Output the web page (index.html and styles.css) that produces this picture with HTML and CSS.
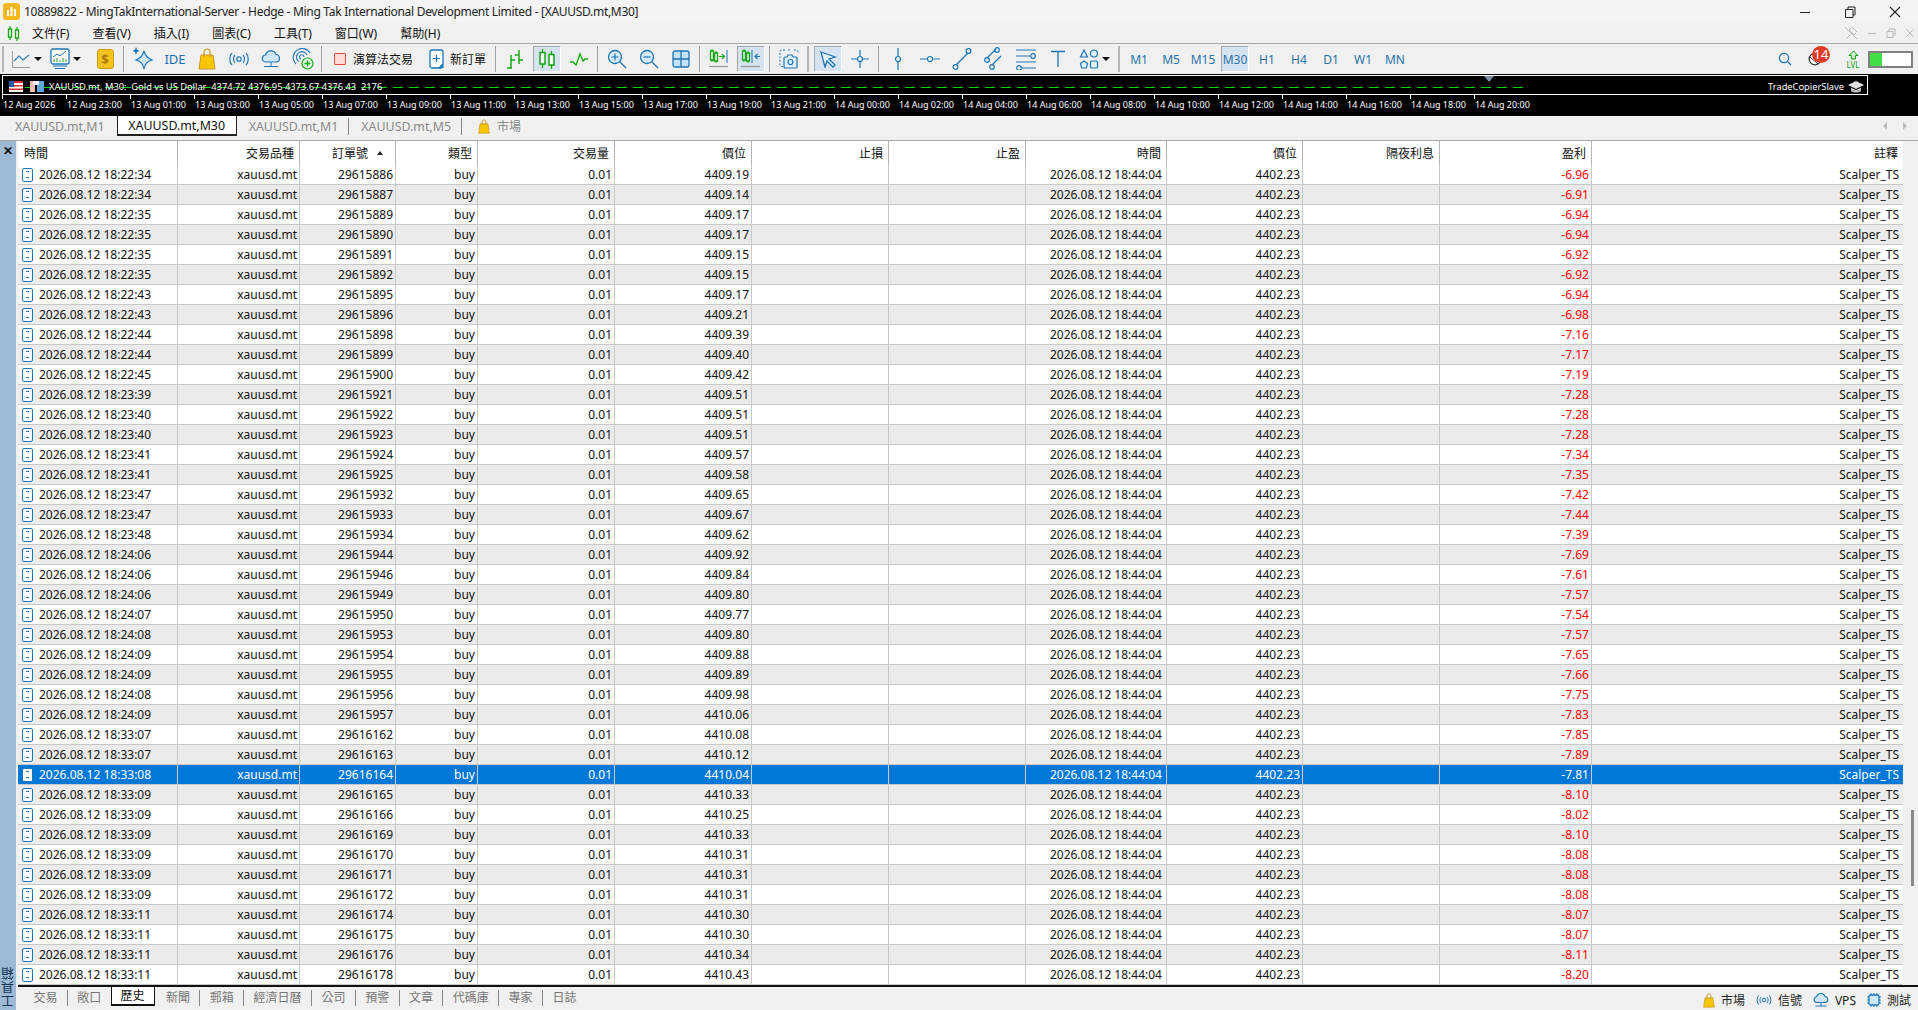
FILE: index.html
```html
<!DOCTYPE html>
<html lang="zh-Hant">
<head>
    <meta charset="UTF-8">
    <title>10889822 - MingTakInternational-Server - Hedge</title>
    <link rel="stylesheet" href="styles.css">
</head>
<body>
<div class="app">
    <div class="titlebar">
        <svg class="app-logo" width="17" height="17" viewBox="0 0 17 17"><rect width="17" height="17" rx="3" fill="#f5b81c"/><path d="M4 13V7h2v6zM7.5 13V4h2v9zM11 13V6h2v7z" fill="#fff"/></svg>
        <span class="title-text">10889822 - MingTakInternational-Server - Hedge - Ming Tak International Development Limited - [XAUUSD.mt,M30]</span>
        <div class="win-buttons">
            <svg width="14" height="14" viewBox="0 0 14 14"><path d="M2 7.5h10" stroke="#222"/></svg>
            <svg width="14" height="14" viewBox="0 0 14 14"><path d="M2.5 4.5h7.500v8h-7.500zM5 4.500V2h7v8h-2" fill="none" stroke="#222"/></svg>
            <svg width="14" height="14" viewBox="0 0 14 14"><path d="M2 2l10 10M12 2L2 12" stroke="#222" stroke-width="1.100"/></svg>
        </div>
    </div>

    <div class="menubar">
        <svg class="menu-logo" width="13" height="15" viewBox="0 0 13 15"><path d="M3 0v3M3 11v3M10 1v3M10 12v3" stroke="#16a916" stroke-width="1.200"/><path d="M1.500 3h3v8h-3zM8.500 4h3v8h-3z" fill="none" stroke="#16a916" stroke-width="1.300"/></svg>
        <span>文件(F)</span><span>查看(V)</span><span>插入(I)</span><span>圖表(C)</span><span>工具(T)</span><span>窗口(W)</span><span>幫助(H)</span>
        <div class="child-buttons">
            <svg width="14" height="14" viewBox="0 0 14 14"><path d="M2 13l4-4M5 4l5 5M8 1l5 5M7 2L4 5M12 7L9 10M1 1l12 12" stroke="#bbb" fill="none"/></svg>
            <svg width="10" height="14" viewBox="0 0 10 14"><path d="M1 7.500h8" stroke="#bbb"/></svg>
            <svg width="10" height="14" viewBox="0 0 10 14"><path d="M1 5.500h6v6H1zM3 5V3h6v6H7.500" fill="none" stroke="#bbb"/></svg>
            <svg width="10" height="14" viewBox="0 0 10 14"><path d="M1 3l8 8M9 3l-8 8" stroke="#bbb"/></svg>
        </div>
    </div>

    <div class="toolbar">
        <i class="grip"></i>
        <div class="tb tb-wide tb-first">
            <svg width="20" height="20" viewBox="0 0 20 20"><path d="M1.500 2v16.500H19" fill="none" stroke="#9a9a9a"/><path d="M3 12l5-5 4 4 6-5" fill="none" stroke="#2f7fb8" stroke-width="1.200"/></svg>
            <i class="caret"></i>
        </div>
        <div class="tb tb-wide">
            <svg width="20" height="22" viewBox="0 0 20 22"><rect x="1" y="1" width="18" height="15" rx="2" fill="#fff" stroke="#1c76b5" stroke-width="1.300"/><path d="M3 9l4-3 3 2 6-5" fill="none" stroke="#1c76b5"/><path d="M4 14v-3M7 14v-4M10 14v-2M13 14v-4M16 14v-3" stroke="#19a019"/><path d="M3 18h14M5 20.500h10" stroke="#1c76b5"/></svg>
            <i class="caret"></i>
        </div>
        <div class="tb tb-shift2">
            <span class="coin">$</span>
        </div>
        <i class="sep"></i>
        <div class="tb">
            <svg width="22" height="24" viewBox="0 0 22 24"><path d="M12 4c1 4 3 7 8 9-5 1-7 4-8 9-1-5-3-8-8-9 5-2 7-5 8-9z" fill="#cfe6f7" stroke="#1c76b5" stroke-width="1.200"/><path d="M4 0l1 2.500L7.500 4 5 5 4 8 3 5 .5 4 3 2.500z" fill="#1c76b5"/></svg>
        </div>
        <div class="tb tb-text">IDE</div>
        <div class="tb">
            <svg width="18" height="22" viewBox="0 0 18 22"><path d="M3 7h12l2 14H1z" fill="#f7c600" stroke="#c9962b"/><path d="M6 9V4a3 3 0 016 0v5" fill="none" stroke="#c9962b" stroke-width="1.200"/></svg>
        </div>
        <div class="tb">
            <svg width="20" height="16" viewBox="0 0 20 16"><circle cx="10" cy="8" r="2.200" fill="none" stroke="#2f7fb8" stroke-width="1.300"/><path d="M6 4c-2 2-2 6 0 8M14 4c2 2 2 6 0 8M3 2c-3 3-3 9 0 12M17 2c3 3 3 9 0 12" fill="none" stroke="#2f7fb8" stroke-width="1.300"/></svg>
        </div>
        <div class="tb">
            <svg width="20" height="20" viewBox="0 0 20 20"><path d="M5 13a3.500 3.500 0 01-.5-7A5.500 5.500 0 0115 5.500 3.800 3.800 0 0115.500 13z" fill="#cfe6f7" stroke="#1c76b5" stroke-width="1.200"/><path d="M10 13v4M3 17.500h14" stroke="#1c76b5"/></svg>
        </div>
        <div class="tb">
            <svg width="22" height="22" viewBox="0 0 22 22"><path d="M4 16A9 9 0 1118 5M6.500 13.500A5.500 5.500 0 1115 7M9 11a2.200 2.200 0 113 -2" fill="none" stroke="#2f7fb8" stroke-width="1.200"/><circle cx="15.500" cy="15.500" r="5.500" fill="#dff5df" stroke="#16a916" stroke-width="1.200"/><path d="M15.500 12.500v6M12.500 15.500h6" stroke="#16a916" stroke-width="1.300"/></svg>
        </div>
        <i class="sep"></i>
        <div class="tb-label tb-algo">
            <i class="algo-stop"></i><span>演算法交易</span>
        </div>
        <div class="tb-label tb-order">
            <svg width="15" height="20" viewBox="0 0 15 20"><path d="M3 1h9a2 2 0 012 2v15l-2 1H3a2 2 0 01-2-2V3a2 2 0 012-2z" fill="#fff" stroke="#1c76b5" stroke-width="1.300"/><path d="M7.500 6v7M4 9.500h7" stroke="#1c76b5" stroke-width="1.200"/><path d="M9 19l5-5v3l-2 2z" fill="#1c76b5"/></svg>
            <span>新訂單</span>
        </div>
        <i class="sep sep-shift"></i>
        <div class="tb">
            <svg width="18" height="20" viewBox="0 0 18 20"><path d="M5 6v14M1 19h4M5 11h4M13 1v14M9 6h4M13 11h4" stroke="#16a916" stroke-width="1.500" fill="none"/></svg>
        </div>
        <div class="tb tb-on">
            <svg width="18" height="20" viewBox="0 0 18 20"><path d="M4.500 0v3M4.500 15v4M13.500 2v3M13.500 16v4" stroke="#0fa50f" stroke-width="1.300"/><path d="M2 3.500h5v11.500H2zM11 5.500h5V16h-5z" fill="#fff" stroke="#0fa50f" stroke-width="1.500"/></svg>
        </div>
        <div class="tb">
            <svg width="20" height="14" viewBox="0 0 20 14"><path d="M1 10h3l3 3 4-11 3 7 2-2h3" fill="none" stroke="#16a916" stroke-width="1.400"/></svg>
        </div>
        <i class="sep"></i>
        <div class="tb">
            <svg width="20" height="20" viewBox="0 0 20 20"><circle cx="8" cy="8" r="6.500" fill="#d6ebf9" stroke="#1c76b5" stroke-width="1.300"/><path d="M8 4.500v7M4.500 8h7" stroke="#1c76b5" stroke-width="1.200"/><path d="M13 13l6 6" stroke="#1c76b5" stroke-width="1.300"/></svg>
        </div>
        <div class="tb">
            <svg width="20" height="20" viewBox="0 0 20 20"><circle cx="8" cy="8" r="6.500" fill="#d6ebf9" stroke="#1c76b5" stroke-width="1.300"/><path d="M4.500 8h7" stroke="#1c76b5" stroke-width="1.200"/><path d="M13 13l6 6" stroke="#1c76b5" stroke-width="1.300"/></svg>
        </div>
        <div class="tb">
            <svg width="18" height="18" viewBox="0 0 18 18"><rect x="1" y="1" width="16" height="16" rx="2" fill="#c4e3f8" stroke="#1c76b5" stroke-width="1.300"/><path d="M9 1v16M1 9h16" stroke="#1c76b5" stroke-width="1.300"/></svg>
        </div>
        <i class="sep"></i>
        <div class="tb">
            <svg width="20" height="20" viewBox="0 0 20 20"><path d="M3 0v2M3 11v2M7 2v2M7 12v2" stroke="#0fa50f"/><path d="M1.500 2h3v9h-3zM5.500 4h3v8h-3z" fill="none" stroke="#0fa50f" stroke-width="1.300"/><path d="M10 7.500h5M13 5l2.500 2.500L13 10" fill="none" stroke="#16a916" stroke-width="1.200"/><path d="M18 1v13" stroke="#1c76b5"/><path d="M0 17.500h19" stroke="#999" stroke-width="1.200"/></svg>
        </div>
        <div class="tb tb-on">
            <svg width="20" height="20" viewBox="0 0 20 20"><path d="M3 0v2M3 11v2M7 2v2M7 12v2" stroke="#0fa50f"/><path d="M1.500 2h3v9h-3zM5.500 4h3v8h-3z" fill="none" stroke="#0fa50f" stroke-width="1.300"/><path d="M11 1v13" stroke="#1c76b5"/><path d="M19 7.500h-5M16.500 5L14 7.500l2.500 2.500" fill="none" stroke="#1c76b5" stroke-width="1.200"/><path d="M0 17.500h19" stroke="#999" stroke-width="1.200"/></svg>
        </div>
        <i class="sep"></i>
        <div class="tb">
            <svg width="20" height="20" viewBox="0 0 20 20"><path d="M6 1H2.500A1.500 1.500 0 001 2.500V16a1.500 1.500 0 001.500 1.500H4M9 1h3M15 1h2.500A1.500 1.500 0 0119 2.500V4" fill="none" stroke="#1c76b5" stroke-dasharray="2 1.500"/><path d="M6 8h2l1-2h4l1 2h3a1 1 0 011 1v9a1 1 0 01-1 1H6a1 1 0 01-1-1V9a1 1 0 011-1z" fill="#e0f0fb" stroke="#1c76b5" stroke-width="1.200"/><circle cx="11.500" cy="13" r="2.500" fill="none" stroke="#1c76b5" stroke-width="1.200"/></svg>
        </div>
        <i class="grip grip-mid"></i>
        <div class="tb tb-on">
            <svg width="18" height="18" viewBox="0 0 18 18"><path d="M2 2l14 5-6 2 6 6-2 2-6-6-2 6z" fill="#e8f2fa" stroke="#1c76b5" stroke-width="1.300"/></svg>
        </div>
        <div class="tb">
            <svg width="18" height="18" viewBox="0 0 18 18"><path d="M9 0v6M9 12v6M0 9h6M12 9h6" stroke="#1c76b5" stroke-width="1.200"/><circle cx="9" cy="9" r="2.500" fill="none" stroke="#1c76b5" stroke-width="1.200"/></svg>
        </div>
        <i class="sep"></i>
        <div class="tb">
            <svg width="8" height="22" viewBox="0 0 8 22"><path d="M4 0v8M4 14v8" stroke="#1c76b5" stroke-width="1.200"/><circle cx="4" cy="11" r="2.500" fill="none" stroke="#1c76b5" stroke-width="1.200"/></svg>
        </div>
        <div class="tb">
            <svg width="20" height="8" viewBox="0 0 20 8"><path d="M0 4h7M13 4h7" stroke="#1c76b5" stroke-width="1.200"/><circle cx="10" cy="4" r="2.500" fill="none" stroke="#1c76b5" stroke-width="1.200"/></svg>
        </div>
        <div class="tb">
            <svg width="20" height="24" viewBox="0 0 20 24"><path d="M4 18L16 6" stroke="#1c76b5" stroke-width="1.200"/><circle cx="3.500" cy="20" r="2.400" fill="none" stroke="#1c76b5" stroke-width="1.200"/><circle cx="16.500" cy="4" r="2.400" fill="none" stroke="#1c76b5" stroke-width="1.200"/></svg>
        </div>
        <div class="tb">
            <svg width="20" height="24" viewBox="0 0 20 24"><path d="M3 11l9-9M8 18l9-9" stroke="#1c76b5" stroke-width="1.200"/><circle cx="3" cy="13" r="2.300" fill="none" stroke="#1c76b5" stroke-width="1.200"/><circle cx="13" cy="3" r="2.300" fill="none" stroke="#1c76b5" stroke-width="1.200"/><circle cx="8" cy="20" r="2.300" fill="none" stroke="#1c76b5" stroke-width="1.200"/></svg>
        </div>
        <div class="tb">
            <svg width="20" height="22" viewBox="0 0 20 22"><path d="M0 2h20M0 8h14M0 14h20M6 20h14" stroke="#1c76b5" stroke-width="1.200"/><circle cx="17" cy="8" r="2.300" fill="#f0f0f0" stroke="#1c76b5" stroke-width="1.200"/><circle cx="3" cy="20" r="2.300" fill="#f0f0f0" stroke="#1c76b5" stroke-width="1.200"/></svg>
        </div>
        <div class="tb">
            <svg width="16" height="18" viewBox="0 0 16 18"><path d="M1 1.500h14M8 1.500V17" stroke="#1c76b5" stroke-width="1.300"/></svg>
        </div>
        <div class="tb tb-wide tb-shapes">
            <svg width="20" height="22" viewBox="0 0 20 22"><path d="M5 2l3.500 7h-7z" fill="#e0f0fb" stroke="#1c76b5" stroke-width="1.200"/><circle cx="15" cy="5.500" r="3.500" fill="#e0f0fb" stroke="#1c76b5" stroke-width="1.200"/><path d="M5 13l3.500 2.500-1.200 4.500H2.700L1.500 15.500z" fill="#e0f0fb" stroke="#1c76b5" stroke-width="1.200"/><rect x="11.500" y="13" width="7" height="7" rx="1" fill="#e0f0fb" stroke="#1c76b5" stroke-width="1.200"/></svg>
            <i class="caret"></i>
        </div>
        <i class="grip grip-mid"></i>
        <div class="tb tb-period">M1</div>
        <div class="tb tb-period">M5</div>
        <div class="tb tb-period">M15</div>
        <div class="tb tb-period tb-on">M30</div>
        <div class="tb tb-period">H1</div>
        <div class="tb tb-period">H4</div>
        <div class="tb tb-period">D1</div>
        <div class="tb tb-period">W1</div>
        <div class="tb tb-period">MN</div>

        <div class="toolbar-right">
            <svg class="search" width="14" height="14" viewBox="0 0 14 14"><circle cx="6" cy="6" r="4.600" fill="none" stroke="#1c76b5" stroke-width="1.200"/><path d="M9.500 9.500L13 13" stroke="#1c76b5" stroke-width="1.300"/></svg>
            <div class="notify">
                <svg width="14" height="14" viewBox="0 0 14 14"><circle cx="7" cy="7" r="5.800" fill="#fff" stroke="#333" stroke-width="1.300"/><path d="M2 5l8 7" stroke="#333"/></svg>
                <span class="badge">14</span>
            </div>
            <div class="lvl">
                <svg width="11" height="10" viewBox="0 0 11 10"><path d="M5.500 1L10 5.500H7.500V9h-4V5.500H1z" fill="#cdeccd" stroke="#12a012"/></svg>
                <span>LVL</span>
            </div>
            <div class="battery"><i class="battery-fill"></i></div>
        </div>
    </div>

    <div class="chart">
        <div class="chart-box">
            <svg class="chart-dash" width="1865" height="18"><line x1="6" y1="11.500" x2="1526" y2="11.500" stroke="#0fd30f" stroke-width="1" stroke-dasharray="10 6"/></svg>
            <svg class="chart-flag" width="14" height="11" viewBox="0 0 14 11"><rect width="14" height="11" fill="#fff"/><rect width="14" height="2" fill="#d83030"/><rect y="4" width="14" height="1.500" fill="#d83030"/><rect y="7.500" width="14" height="1.500" fill="#d83030"/><rect width="5" height="6" fill="#2a5aa8"/></svg>
            <svg class="chart-type" width="14" height="11" viewBox="0 0 14 11"><path d="M0 0h5v11H0z" fill="#f3c0b8"/><path d="M7 0h7v11H7z" fill="#5ea8de"/><path d="M3 0h6v4H3z" fill="#eee"/></svg>
            <span class="chart-info">XAUUSD.mt, M30:&nbsp; Gold vs US Dollar&nbsp; 4374.72 4376.95 4373.67 4376.43&nbsp; 2176</span>
            <i class="chart-shift"></i>
            <span class="chart-ea">TradeCopierSlave</span>
            <svg class="chart-hat" width="16" height="14" viewBox="0 0 16 14"><path d="M0 5l8-4 8 4-8 4z" fill="#ddd"/><path d="M3 7.500V11c2 2 8 2 10 0V7.500L8 10z" fill="#bbb"/></svg>
        </div>
        <div class="chart-axis">
            <span>12 Aug 2026</span><span>12 Aug 23:00</span><span>13 Aug 01:00</span><span>13 Aug 03:00</span><span>13 Aug 05:00</span><span>13 Aug 07:00</span><span>13 Aug 09:00</span><span>13 Aug 11:00</span><span>13 Aug 13:00</span><span>13 Aug 15:00</span><span>13 Aug 17:00</span><span>13 Aug 19:00</span><span>13 Aug 21:00</span><span>14 Aug 00:00</span><span>14 Aug 02:00</span><span>14 Aug 04:00</span><span>14 Aug 06:00</span><span>14 Aug 08:00</span><span>14 Aug 10:00</span><span>14 Aug 12:00</span><span>14 Aug 14:00</span><span>14 Aug 16:00</span><span>14 Aug 18:00</span><span>14 Aug 20:00</span>
        </div>
    </div>

    <div class="chart-tabs">
        <span class="chart-tab">XAUUSD.mt,M1</span>
        <span class="chart-tab chart-tab-active">XAUUSD.mt,M30</span>
        <span class="chart-tab chart-tab-line">XAUUSD.mt,M1</span>
        <span class="chart-tab chart-tab-line">XAUUSD.mt,M5</span>
        <span class="chart-tab chart-tab-market">
            <svg width="12" height="15" viewBox="0 0 18 22"><path d="M3 7h12l2 14H1z" fill="#f7c600" stroke="#c9962b"/><path d="M6 9V4a3 3 0 016 0v5" fill="none" stroke="#c9962b" stroke-width="1.400"/></svg>
            市場
        </span>
        <div class="chart-tabs-nav"><i class="nav-left"></i><i class="nav-right"></i></div>
    </div>

    <div class="workspace">
        <div class="toolbox">
            <span class="toolbox-close">✕</span>
            <span class="toolbox-name">工具箱</span>
        </div>
        <div class="panel">
            <div class="panel-main">
                <table class="orders">
                    <colgroup>
                        <col class="w-time"><col class="w-symbol"><col class="w-ticket"><col class="w-type"><col class="w-vol"><col class="w-price"><col class="w-sl"><col class="w-tp"><col class="w-close"><col class="w-cprice"><col class="w-swap"><col class="w-profit"><col class="w-comment">
                    </colgroup>
                    <thead>
                        <tr><th class="first">時間</th><th>交易品種</th><th class="sorted">訂單號</th><th>類型</th><th>交易量</th><th>價位</th><th>止損</th><th>止盈</th><th>時間</th><th>價位</th><th>隔夜利息</th><th>盈利</th><th>註釋</th></tr>
                    </thead>
                    <tbody>
                        <tr><td class="first"><i class="doc"></i>2026.08.12 18:22:34</td><td>xauusd.mt</td><td>29615886</td><td>buy</td><td>0.01</td><td>4409.19</td><td></td><td></td><td class="closed">2026.08.12 18:44:04</td><td>4402.23</td><td></td><td class="loss">-6.96</td><td class="note">Scalper_TS</td></tr>
                        <tr><td class="first"><i class="doc"></i>2026.08.12 18:22:34</td><td>xauusd.mt</td><td>29615887</td><td>buy</td><td>0.01</td><td>4409.14</td><td></td><td></td><td class="closed">2026.08.12 18:44:04</td><td>4402.23</td><td></td><td class="loss">-6.91</td><td class="note">Scalper_TS</td></tr>
                        <tr><td class="first"><i class="doc"></i>2026.08.12 18:22:35</td><td>xauusd.mt</td><td>29615889</td><td>buy</td><td>0.01</td><td>4409.17</td><td></td><td></td><td class="closed">2026.08.12 18:44:04</td><td>4402.23</td><td></td><td class="loss">-6.94</td><td class="note">Scalper_TS</td></tr>
                        <tr><td class="first"><i class="doc"></i>2026.08.12 18:22:35</td><td>xauusd.mt</td><td>29615890</td><td>buy</td><td>0.01</td><td>4409.17</td><td></td><td></td><td class="closed">2026.08.12 18:44:04</td><td>4402.23</td><td></td><td class="loss">-6.94</td><td class="note">Scalper_TS</td></tr>
                        <tr><td class="first"><i class="doc"></i>2026.08.12 18:22:35</td><td>xauusd.mt</td><td>29615891</td><td>buy</td><td>0.01</td><td>4409.15</td><td></td><td></td><td class="closed">2026.08.12 18:44:04</td><td>4402.23</td><td></td><td class="loss">-6.92</td><td class="note">Scalper_TS</td></tr>
                        <tr><td class="first"><i class="doc"></i>2026.08.12 18:22:35</td><td>xauusd.mt</td><td>29615892</td><td>buy</td><td>0.01</td><td>4409.15</td><td></td><td></td><td class="closed">2026.08.12 18:44:04</td><td>4402.23</td><td></td><td class="loss">-6.92</td><td class="note">Scalper_TS</td></tr>
                        <tr><td class="first"><i class="doc"></i>2026.08.12 18:22:43</td><td>xauusd.mt</td><td>29615895</td><td>buy</td><td>0.01</td><td>4409.17</td><td></td><td></td><td class="closed">2026.08.12 18:44:04</td><td>4402.23</td><td></td><td class="loss">-6.94</td><td class="note">Scalper_TS</td></tr>
                        <tr><td class="first"><i class="doc"></i>2026.08.12 18:22:43</td><td>xauusd.mt</td><td>29615896</td><td>buy</td><td>0.01</td><td>4409.21</td><td></td><td></td><td class="closed">2026.08.12 18:44:04</td><td>4402.23</td><td></td><td class="loss">-6.98</td><td class="note">Scalper_TS</td></tr>
                        <tr><td class="first"><i class="doc"></i>2026.08.12 18:22:44</td><td>xauusd.mt</td><td>29615898</td><td>buy</td><td>0.01</td><td>4409.39</td><td></td><td></td><td class="closed">2026.08.12 18:44:04</td><td>4402.23</td><td></td><td class="loss">-7.16</td><td class="note">Scalper_TS</td></tr>
                        <tr><td class="first"><i class="doc"></i>2026.08.12 18:22:44</td><td>xauusd.mt</td><td>29615899</td><td>buy</td><td>0.01</td><td>4409.40</td><td></td><td></td><td class="closed">2026.08.12 18:44:04</td><td>4402.23</td><td></td><td class="loss">-7.17</td><td class="note">Scalper_TS</td></tr>
                        <tr><td class="first"><i class="doc"></i>2026.08.12 18:22:45</td><td>xauusd.mt</td><td>29615900</td><td>buy</td><td>0.01</td><td>4409.42</td><td></td><td></td><td class="closed">2026.08.12 18:44:04</td><td>4402.23</td><td></td><td class="loss">-7.19</td><td class="note">Scalper_TS</td></tr>
                        <tr><td class="first"><i class="doc"></i>2026.08.12 18:23:39</td><td>xauusd.mt</td><td>29615921</td><td>buy</td><td>0.01</td><td>4409.51</td><td></td><td></td><td class="closed">2026.08.12 18:44:04</td><td>4402.23</td><td></td><td class="loss">-7.28</td><td class="note">Scalper_TS</td></tr>
                        <tr><td class="first"><i class="doc"></i>2026.08.12 18:23:40</td><td>xauusd.mt</td><td>29615922</td><td>buy</td><td>0.01</td><td>4409.51</td><td></td><td></td><td class="closed">2026.08.12 18:44:04</td><td>4402.23</td><td></td><td class="loss">-7.28</td><td class="note">Scalper_TS</td></tr>
                        <tr><td class="first"><i class="doc"></i>2026.08.12 18:23:40</td><td>xauusd.mt</td><td>29615923</td><td>buy</td><td>0.01</td><td>4409.51</td><td></td><td></td><td class="closed">2026.08.12 18:44:04</td><td>4402.23</td><td></td><td class="loss">-7.28</td><td class="note">Scalper_TS</td></tr>
                        <tr><td class="first"><i class="doc"></i>2026.08.12 18:23:41</td><td>xauusd.mt</td><td>29615924</td><td>buy</td><td>0.01</td><td>4409.57</td><td></td><td></td><td class="closed">2026.08.12 18:44:04</td><td>4402.23</td><td></td><td class="loss">-7.34</td><td class="note">Scalper_TS</td></tr>
                        <tr><td class="first"><i class="doc"></i>2026.08.12 18:23:41</td><td>xauusd.mt</td><td>29615925</td><td>buy</td><td>0.01</td><td>4409.58</td><td></td><td></td><td class="closed">2026.08.12 18:44:04</td><td>4402.23</td><td></td><td class="loss">-7.35</td><td class="note">Scalper_TS</td></tr>
                        <tr><td class="first"><i class="doc"></i>2026.08.12 18:23:47</td><td>xauusd.mt</td><td>29615932</td><td>buy</td><td>0.01</td><td>4409.65</td><td></td><td></td><td class="closed">2026.08.12 18:44:04</td><td>4402.23</td><td></td><td class="loss">-7.42</td><td class="note">Scalper_TS</td></tr>
                        <tr><td class="first"><i class="doc"></i>2026.08.12 18:23:47</td><td>xauusd.mt</td><td>29615933</td><td>buy</td><td>0.01</td><td>4409.67</td><td></td><td></td><td class="closed">2026.08.12 18:44:04</td><td>4402.23</td><td></td><td class="loss">-7.44</td><td class="note">Scalper_TS</td></tr>
                        <tr><td class="first"><i class="doc"></i>2026.08.12 18:23:48</td><td>xauusd.mt</td><td>29615934</td><td>buy</td><td>0.01</td><td>4409.62</td><td></td><td></td><td class="closed">2026.08.12 18:44:04</td><td>4402.23</td><td></td><td class="loss">-7.39</td><td class="note">Scalper_TS</td></tr>
                        <tr><td class="first"><i class="doc"></i>2026.08.12 18:24:06</td><td>xauusd.mt</td><td>29615944</td><td>buy</td><td>0.01</td><td>4409.92</td><td></td><td></td><td class="closed">2026.08.12 18:44:04</td><td>4402.23</td><td></td><td class="loss">-7.69</td><td class="note">Scalper_TS</td></tr>
                        <tr><td class="first"><i class="doc"></i>2026.08.12 18:24:06</td><td>xauusd.mt</td><td>29615946</td><td>buy</td><td>0.01</td><td>4409.84</td><td></td><td></td><td class="closed">2026.08.12 18:44:04</td><td>4402.23</td><td></td><td class="loss">-7.61</td><td class="note">Scalper_TS</td></tr>
                        <tr><td class="first"><i class="doc"></i>2026.08.12 18:24:06</td><td>xauusd.mt</td><td>29615949</td><td>buy</td><td>0.01</td><td>4409.80</td><td></td><td></td><td class="closed">2026.08.12 18:44:04</td><td>4402.23</td><td></td><td class="loss">-7.57</td><td class="note">Scalper_TS</td></tr>
                        <tr><td class="first"><i class="doc"></i>2026.08.12 18:24:07</td><td>xauusd.mt</td><td>29615950</td><td>buy</td><td>0.01</td><td>4409.77</td><td></td><td></td><td class="closed">2026.08.12 18:44:04</td><td>4402.23</td><td></td><td class="loss">-7.54</td><td class="note">Scalper_TS</td></tr>
                        <tr><td class="first"><i class="doc"></i>2026.08.12 18:24:08</td><td>xauusd.mt</td><td>29615953</td><td>buy</td><td>0.01</td><td>4409.80</td><td></td><td></td><td class="closed">2026.08.12 18:44:04</td><td>4402.23</td><td></td><td class="loss">-7.57</td><td class="note">Scalper_TS</td></tr>
                        <tr><td class="first"><i class="doc"></i>2026.08.12 18:24:09</td><td>xauusd.mt</td><td>29615954</td><td>buy</td><td>0.01</td><td>4409.88</td><td></td><td></td><td class="closed">2026.08.12 18:44:04</td><td>4402.23</td><td></td><td class="loss">-7.65</td><td class="note">Scalper_TS</td></tr>
                        <tr><td class="first"><i class="doc"></i>2026.08.12 18:24:09</td><td>xauusd.mt</td><td>29615955</td><td>buy</td><td>0.01</td><td>4409.89</td><td></td><td></td><td class="closed">2026.08.12 18:44:04</td><td>4402.23</td><td></td><td class="loss">-7.66</td><td class="note">Scalper_TS</td></tr>
                        <tr><td class="first"><i class="doc"></i>2026.08.12 18:24:08</td><td>xauusd.mt</td><td>29615956</td><td>buy</td><td>0.01</td><td>4409.98</td><td></td><td></td><td class="closed">2026.08.12 18:44:04</td><td>4402.23</td><td></td><td class="loss">-7.75</td><td class="note">Scalper_TS</td></tr>
                        <tr><td class="first"><i class="doc"></i>2026.08.12 18:24:09</td><td>xauusd.mt</td><td>29615957</td><td>buy</td><td>0.01</td><td>4410.06</td><td></td><td></td><td class="closed">2026.08.12 18:44:04</td><td>4402.23</td><td></td><td class="loss">-7.83</td><td class="note">Scalper_TS</td></tr>
                        <tr><td class="first"><i class="doc"></i>2026.08.12 18:33:07</td><td>xauusd.mt</td><td>29616162</td><td>buy</td><td>0.01</td><td>4410.08</td><td></td><td></td><td class="closed">2026.08.12 18:44:04</td><td>4402.23</td><td></td><td class="loss">-7.85</td><td class="note">Scalper_TS</td></tr>
                        <tr><td class="first"><i class="doc"></i>2026.08.12 18:33:07</td><td>xauusd.mt</td><td>29616163</td><td>buy</td><td>0.01</td><td>4410.12</td><td></td><td></td><td class="closed">2026.08.12 18:44:04</td><td>4402.23</td><td></td><td class="loss">-7.89</td><td class="note">Scalper_TS</td></tr>
                        <tr class="selected"><td class="first"><i class="doc"></i>2026.08.12 18:33:08</td><td>xauusd.mt</td><td>29616164</td><td>buy</td><td>0.01</td><td>4410.04</td><td></td><td></td><td class="closed">2026.08.12 18:44:04</td><td>4402.23</td><td></td><td class="loss">-7.81</td><td class="note">Scalper_TS</td></tr>
                        <tr><td class="first"><i class="doc"></i>2026.08.12 18:33:09</td><td>xauusd.mt</td><td>29616165</td><td>buy</td><td>0.01</td><td>4410.33</td><td></td><td></td><td class="closed">2026.08.12 18:44:04</td><td>4402.23</td><td></td><td class="loss">-8.10</td><td class="note">Scalper_TS</td></tr>
                        <tr><td class="first"><i class="doc"></i>2026.08.12 18:33:09</td><td>xauusd.mt</td><td>29616166</td><td>buy</td><td>0.01</td><td>4410.25</td><td></td><td></td><td class="closed">2026.08.12 18:44:04</td><td>4402.23</td><td></td><td class="loss">-8.02</td><td class="note">Scalper_TS</td></tr>
                        <tr><td class="first"><i class="doc"></i>2026.08.12 18:33:09</td><td>xauusd.mt</td><td>29616169</td><td>buy</td><td>0.01</td><td>4410.33</td><td></td><td></td><td class="closed">2026.08.12 18:44:04</td><td>4402.23</td><td></td><td class="loss">-8.10</td><td class="note">Scalper_TS</td></tr>
                        <tr><td class="first"><i class="doc"></i>2026.08.12 18:33:09</td><td>xauusd.mt</td><td>29616170</td><td>buy</td><td>0.01</td><td>4410.31</td><td></td><td></td><td class="closed">2026.08.12 18:44:04</td><td>4402.23</td><td></td><td class="loss">-8.08</td><td class="note">Scalper_TS</td></tr>
                        <tr><td class="first"><i class="doc"></i>2026.08.12 18:33:09</td><td>xauusd.mt</td><td>29616171</td><td>buy</td><td>0.01</td><td>4410.31</td><td></td><td></td><td class="closed">2026.08.12 18:44:04</td><td>4402.23</td><td></td><td class="loss">-8.08</td><td class="note">Scalper_TS</td></tr>
                        <tr><td class="first"><i class="doc"></i>2026.08.12 18:33:09</td><td>xauusd.mt</td><td>29616172</td><td>buy</td><td>0.01</td><td>4410.31</td><td></td><td></td><td class="closed">2026.08.12 18:44:04</td><td>4402.23</td><td></td><td class="loss">-8.08</td><td class="note">Scalper_TS</td></tr>
                        <tr><td class="first"><i class="doc"></i>2026.08.12 18:33:11</td><td>xauusd.mt</td><td>29616174</td><td>buy</td><td>0.01</td><td>4410.30</td><td></td><td></td><td class="closed">2026.08.12 18:44:04</td><td>4402.23</td><td></td><td class="loss">-8.07</td><td class="note">Scalper_TS</td></tr>
                        <tr><td class="first"><i class="doc"></i>2026.08.12 18:33:11</td><td>xauusd.mt</td><td>29616175</td><td>buy</td><td>0.01</td><td>4410.30</td><td></td><td></td><td class="closed">2026.08.12 18:44:04</td><td>4402.23</td><td></td><td class="loss">-8.07</td><td class="note">Scalper_TS</td></tr>
                        <tr><td class="first"><i class="doc"></i>2026.08.12 18:33:11</td><td>xauusd.mt</td><td>29616176</td><td>buy</td><td>0.01</td><td>4410.34</td><td></td><td></td><td class="closed">2026.08.12 18:44:04</td><td>4402.23</td><td></td><td class="loss">-8.11</td><td class="note">Scalper_TS</td></tr>
                        <tr><td class="first"><i class="doc"></i>2026.08.12 18:33:11</td><td>xauusd.mt</td><td>29616178</td><td>buy</td><td>0.01</td><td>4410.43</td><td></td><td></td><td class="closed">2026.08.12 18:44:04</td><td>4402.23</td><td></td><td class="loss">-8.20</td><td class="note">Scalper_TS</td></tr>
                    </tbody>
                </table>
                <div class="scrollbar"><i class="scroll-thumb"></i></div>
            </div>
            <div class="bottom-bar">
                <span class="btab">交易</span><span class="btab btab-before-active">敞口</span><span class="btab btab-active">歷史</span><span class="btab">新聞</span><span class="btab">郵箱</span><span class="btab">經濟日曆</span><span class="btab">公司</span><span class="btab">預警</span><span class="btab">文章</span><span class="btab">代碼庫</span><span class="btab">專家</span><span class="btab btab-last">日誌</span>
                <div class="status">
                    <span class="status-item">
                        <svg width="12" height="15" viewBox="0 0 18 22"><path d="M3 7h12l2 14H1z" fill="#f7c600" stroke="#c9962b"/><path d="M6 9V4a3 3 0 016 0v5" fill="none" stroke="#c9962b" stroke-width="1.400"/></svg>
                        市場
                    </span>
                    <span class="status-item">
                        <svg width="16" height="12" viewBox="0 0 20 16"><circle cx="10" cy="8" r="2.200" fill="none" stroke="#2f7fb8" stroke-width="1.400"/><path d="M6 4c-2 2-2 6 0 8M14 4c2 2 2 6 0 8M3 2c-3 3-3 9 0 12M17 2c3 3 3 9 0 12" fill="none" stroke="#2f7fb8" stroke-width="1.400"/></svg>
                        信號
                    </span>
                    <span class="status-item">
                        <svg width="16" height="16" viewBox="0 0 20 20"><path d="M5 13a3.500 3.500 0 01-.5-7A5.500 5.500 0 0115 5.500 3.800 3.800 0 0115.500 13z" fill="#cfe6f7" stroke="#1c76b5" stroke-width="1.300"/><path d="M10 13v4M3 17.500h14" stroke="#1c76b5" stroke-width="1.300"/></svg>
                        VPS
                    </span>
                    <span class="status-item">
                        <svg width="14" height="14" viewBox="0 0 14 14"><rect x="2" y="2" width="10" height="10" rx="1.500" fill="#cfe6f7" stroke="#1c76b5" stroke-width="1.300"/><path d="M4 0v2M7 0v2M10 0v2M4 12v2M7 12v2M10 12v2M0 4h2M0 7h2M0 10h2M12 4h2M12 7h2M12 10h2" stroke="#1c76b5"/></svg>
                        測試
                    </span>
                </div>
            </div>
        </div>
    </div>
</div>
</body>
</html>
```

FILE: styles.css
```css
* {
    box-sizing: border-box;
}

html, body {
    margin: 0;
    padding: 0;
    overflow: hidden;
}

body {
    font-family: "Noto Sans", "Noto Sans CJK TC", sans-serif;
    font-size: 12px;
    color: #111;
    background-color: #f0f0f0;
}

i {
    display: block;
    font-style: normal;
}

.app {
    display: flex;
    flex-direction: column;
    width: 1918px;
    height: 1010px;
}

/* title bar */
.titlebar {
    display: flex;
    align-items: center;
    height: 23px;
    padding-left: 3px;
    background-color: #f3f3f3;
    flex: none;
}

.title-text {
    margin-left: 4px;
    color: #222;
    letter-spacing: -0.3px;
}

.win-buttons {
    display: flex;
    gap: 31px;
    margin-left: auto;
    margin-right: 16px;
}

/* menu */
.menubar {
    display: flex;
    align-items: center;
    gap: 23px;
    height: 21px;
    padding-left: 7px;
    border-bottom: 1px solid #a8a8a8;
    flex: none;
}

.menu-logo {
    margin-right: -11px;
}

.child-buttons {
    display: flex;
    align-items: center;
    gap: 9px;
    margin-left: auto;
    margin-right: 3px;
}

/* toolbar */
.toolbar {
    display: flex;
    align-items: center;
    gap: 4px;
    height: 30px;
    padding-left: 2px;
    flex: none;
}

.grip {
    width: 2px;
    height: 26px;
    background-image: radial-gradient(#b5b5b5 1px, transparent 1px);
    background-size: 2px 3px;
    flex: none;
}

.grip-mid {
    margin-right: 1px;
}

.sep {
    width: 1px;
    height: 26px;
    margin-right: 1px;
    background-color: #a0a0a0;
    flex: none;
}

.sep-shift {
    margin-left: 1px;
}

.tb {
    display: flex;
    align-items: center;
    justify-content: center;
    width: 28px;
    height: 26px;
    flex: none;
}

.tb-wide {
    width: 35px;
    gap: 3px;
    justify-content: flex-start;
}

.tb-first {
    margin-left: 3px;
}

.tb-shapes {
    width: 36px;
    margin-left: 1px;
    margin-right: 1px;
    padding-left: 2px;
}

.tb-shift2 {
    margin-left: 2px;
}

.tb-text {
    color: #1c6fae;
    font-size: 13px;
}

.tb-period {
    color: #2a72ab;
    font-size: 12px;
}

.tb-on {
    background-color: #d5e3f1;
    border-top: 1px solid #a6a6a6;
    border-left: 1px solid #a6a6a6;
    border-right: 1px solid #fff;
    border-bottom: 1px solid #fff;
}

.caret {
    width: 0;
    height: 0;
    border-left: 4px solid transparent;
    border-right: 4px solid transparent;
    border-top: 4px solid #111;
    flex: none;
}

.coin {
    display: flex;
    align-items: center;
    justify-content: center;
    width: 17px;
    height: 20px;
    border: 1px solid #c99d1e;
    border-radius: 3px;
    background-color: #f6c21c;
    color: #a9761a;
    font-size: 13px;
    font-weight: 700;
}

.tb-label {
    display: flex;
    align-items: center;
    height: 26px;
    flex: none;
}

.tb-algo {
    gap: 7px;
    width: 84px;
    margin-left: 5px;
    padding-left: 2px;
}

.tb-order {
    gap: 6px;
    width: 65px;
    margin-left: 5px;
    padding-left: 4px;
}

.algo-stop {
    width: 12px;
    height: 12px;
    border: 1px solid #e04a40;
    border-radius: 1px;
    background-color: #fcdcd6;
}

.toolbar-right {
    display: flex;
    align-items: center;
    margin-left: auto;
    padding-right: 5px;
}

.search {
    margin-right: 16px;
}

.notify {
    position: relative;
    width: 14px;
    height: 14px;
    margin-right: 24px;
}

.badge {
    position: absolute;
    left: 4px;
    top: -6px;
    width: 18px;
    height: 17px;
    border-radius: 50%;
    background-color: #e23b28;
    color: #fff;
    font-size: 13px;
    line-height: 17px;
    text-align: center;
}

.lvl {
    display: flex;
    flex-direction: column;
    align-items: center;
    width: 14px;
    margin-right: 8px;
    color: #12a012;
    font-size: 8px;
    line-height: 9px;
}

.battery {
    width: 45px;
    height: 17px;
    border: 2px solid #808080;
    background-color: #fff;
}

.battery-fill {
    width: 12px;
    height: 100%;
    background-color: #44dd44;
}

/* chart strip */
.chart {
    height: 42px;
    padding-top: 1px;
    background-color: #000;
    color: #fff;
    font-size: 9px;
    flex: none;
}

.chart-box {
    position: relative;
    display: flex;
    align-items: center;
    width: 1866px;
    height: 20px;
    margin-left: 2px;
    padding-top: 3px;
    border: 1px solid #fff;
    font-size: 9.3px;
}

.chart-dash {
    position: absolute;
    left: 0;
    top: 0;
}

.chart-flag {
    position: relative;
    margin-left: 6px;
}

.chart-type {
    position: relative;
    margin-left: 7px;
}

.chart-info {
    position: relative;
    margin-left: 5px;
    white-space: nowrap;
}

.chart-shift {
    position: absolute;
    left: 1481px;
    top: 0;
    width: 0;
    height: 0;
    border-left: 5px solid transparent;
    border-right: 5px solid transparent;
    border-top: 6px solid #7d8fa3;
}

.chart-ea {
    margin-left: auto;
    margin-right: 4px;
}

.chart-hat {
    margin-right: 3px;
}

.chart-axis {
    display: flex;
    padding-left: 2px;
}

.chart-axis span {
    width: 64px;
    height: 21px;
    padding-top: 3px;
    border-left: 1px solid transparent;
    background: linear-gradient(#fff, #fff) left top / 1px 4px no-repeat;
    background-origin: border-box;
    line-height: 13px;
    white-space: nowrap;
    flex: none;
}

/* chart tabs */
.chart-tabs {
    display: flex;
    align-items: center;
    height: 24px;
    padding-left: 15px;
    padding-bottom: 4px;
    font-size: 12.4px;
    color: #8a8a8a;
    flex: none;
}

.chart-tab {
    white-space: nowrap;
}

.chart-tab-active {
    display: flex;
    align-items: center;
    justify-content: center;
    width: 120px;
    height: 20px;
    margin: 0 12px 0 12px;
    border: 1px solid #222;
    border-top: none;
    border-width: 0 1px 2px 1px;
    background-color: #fff;
    color: #111;
}

.chart-tab-line {
    padding-right: 10px;
    margin-right: 12px;
    border-right: 1px solid #888;
}

.chart-tab-market {
    display: flex;
    align-items: center;
    gap: 7px;
    margin-left: 4px;
    font-size: 12px;
}

.chart-tabs-nav {
    display: flex;
    gap: 16px;
    margin-left: auto;
    margin-right: 11px;
}

.nav-left {
    border-top: 4px solid transparent;
    border-bottom: 4px solid transparent;
    border-right: 4px solid #bbb;
}

.nav-right {
    border-top: 4px solid transparent;
    border-bottom: 4px solid transparent;
    border-left: 4px solid #bbb;
}

/* tool box */
.workspace {
    display: flex;
    flex: 1;
    min-height: 0;
    border-top: 1px solid #a8a8a8;
}

.toolbox {
    display: flex;
    flex-direction: column;
    justify-content: space-between;
    align-items: center;
    width: 16px;
    margin-right: 2px;
    background-color: #9db9d6;
    flex: none;
}

.toolbox-close {
    margin-top: 3px;
    font-size: 12px;
    font-weight: 700;
    line-height: 14px;
}

.toolbox-name {
    margin-bottom: 2px;
    color: #17375a;
    font-size: 13px;
    writing-mode: vertical-rl;
    transform: rotate(180deg);
    letter-spacing: 1px;
    line-height: 15px;
}

.panel {
    display: flex;
    flex-direction: column;
    flex: 1;
    min-width: 0;
}

.panel-main {
    display: flex;
    height: 844px;
    flex: none;
    overflow: hidden;
}

/* orders table */
.orders {
    width: 1885px;
    border-collapse: separate;
    border-spacing: 0;
    table-layout: fixed;
    background-color: #fff;
    flex: none;
}

.w-time { width: 160px; }
.w-symbol { width: 122px; }
.w-ticket { width: 96px; }
.w-type { width: 82px; }
.w-vol { width: 137px; }
.w-price { width: 137px; }
.w-sl { width: 137px; }
.w-tp { width: 137px; }
.w-close { width: 141px; }
.w-cprice { width: 136px; }
.w-swap { width: 137px; }
.w-profit { width: 152px; }
.w-comment { width: 311px; }

.orders th {
    height: 24px;
    padding: 0 5px 0 0;
    border-right: 1px solid #b4b4b4;
    font-weight: 400;
    text-align: right;
}

.orders th:last-child, .orders td:last-child {
    border-right: none;
}

.orders th.first {
    padding-left: 6px;
    text-align: left;
}

.orders th.sorted {
    position: relative;
    padding-right: 27px;
}

.orders th.sorted::after {
    content: "";
    position: absolute;
    right: 12px;
    top: 10px;
    border-left: 3px solid transparent;
    border-right: 3px solid transparent;
    border-bottom: 4px solid #222;
}

.orders td {
    height: 20px;
    padding: 0 2px 0 0;
    border-right: 1px solid #c8c8c8;
    border-bottom: 1px solid #c8c8c8;
    text-align: right;
    white-space: nowrap;
    line-height: 19px;
    overflow: hidden;
}

.orders td.first {
    padding-left: 4px;
    text-align: left;
}

.orders td.closed, .orders td.note {
    padding-right: 4px;
}

.orders tbody tr:nth-child(even) td {
    background-color: #ebebeb;
}

.orders td.loss {
    color: #ff0000;
}

.orders tbody tr.selected td {
    background-color: #0078d7;
    color: #fff;
}

.doc {
    position: relative;
    display: inline-block;
    width: 11px;
    height: 14px;
    margin-right: 6px;
    border: 1px solid #1c76b5;
    border-radius: 2px;
    background-color: #fff;
    vertical-align: -3px;
}

.doc::before {
    content: "";
    position: absolute;
    left: 3px;
    top: 2px;
    width: 3px;
    height: 5px;
    border-top: 1px solid #1c76b5;
    border-bottom: 1px solid #1c76b5;
}

.scrollbar {
    position: relative;
    flex: 1;
}

.scroll-thumb {
    position: absolute;
    left: 8px;
    top: 669px;
    width: 3px;
    height: 76px;
    background-color: #8a8a8a;
}

/* bottom tabs */
.bottom-bar {
    display: flex;
    align-items: center;
    flex: 1;
    padding-left: 6px;
    padding-bottom: 6px;
    border-top: 2px solid #111;
    color: #777;
}

.btab {
    height: 16px;
    padding: 0 9.4px;
    border-right: 1px solid #888;
    line-height: 15px;
    white-space: nowrap;
}

.btab-before-active, .btab-last {
    border-right: none;
}

.btab-active {
    display: flex;
    align-items: center;
    align-self: flex-start;
    height: 19px;
    margin-right: 2px;
    padding: 0 9px;
    border: 1px solid #111;
    border-top: none;
    border-bottom-width: 2px;
    background-color: #fff;
    color: #111;
}

.status {
    display: flex;
    align-items: center;
    gap: 11px;
    margin-left: auto;
    margin-top: 4px;
    margin-right: 7px;
    color: #222;
}

.status-item {
    display: flex;
    align-items: center;
    gap: 6px;
}
```
